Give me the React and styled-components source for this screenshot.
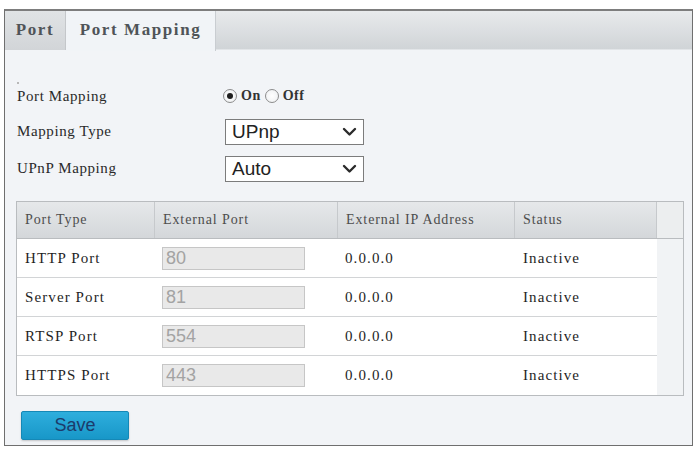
import React from "react";
import styled, {createGlobalStyle} from "styled-components";

const GlobalStyle = createGlobalStyle`
    body {
        margin: 0;
        background: #ffffff;
        font-family: "Liberation Serif", serif;
    }
    * { box-sizing: border-box; }
`;

const ports = [
    {name: "HTTP Port", ext: "80", ip: "0.0.0.0", status: "Inactive"},
    {name: "Server Port", ext: "81", ip: "0.0.0.0", status: "Inactive"},
    {name: "RTSP Port", ext: "554", ip: "0.0.0.0", status: "Inactive"},
    {name: "HTTPS Port", ext: "443", ip: "0.0.0.0", status: "Inactive"},
];

function Chevron() {
    return (
        <svg width="15" height="10" viewBox="0 0 15 10">
            <path d="M2 2 L7.5 7.5 L13 2" fill="none" stroke="#2b2b2b" strokeWidth="2.4" strokeLinecap="round" strokeLinejoin="round" />
        </svg>
    );
}

function App() {
    return (
        <Frame>
            <GlobalStyle />
            <TabBar>
                <Tab>Port</Tab>
                <Tab $active>Port Mapping</Tab>
            </TabBar>
            <Content>
                <Dot />
                <Form>
                    <Label>Port Mapping</Label>
                    <RadioGroup>
                        <Radio $checked />
                        <RadioText>On</RadioText>
                        <Radio />
                        <RadioText>Off</RadioText>
                    </RadioGroup>
                    <Label>Mapping Type</Label>
                    <Select>
                        <span>UPnp</span>
                        <Chevron />
                    </Select>
                    <Label>UPnP Mapping</Label>
                    <Select>
                        <span>Auto</span>
                        <Chevron />
                    </Select>
                </Form>
                <Table>
                    <HeadRow>
                        <HeadCell>Port Type</HeadCell>
                        <HeadCell>External Port</HeadCell>
                        <HeadCell>External IP Address</HeadCell>
                        <HeadCell>Status</HeadCell>
                        <HeadCell $spare />
                    </HeadRow>
                    {ports.map((p) => (
                        <BodyRow key={p.name}>
                            <Cell>{p.name}</Cell>
                            <Cell $pad={7}>
                                <PortInput>{p.ext}</PortInput>
                            </Cell>
                            <Cell $pad={7}>{p.ip}</Cell>
                            <Cell>{p.status}</Cell>
                            <Spare />
                        </BodyRow>
                    ))}
                </Table>
                <SaveButton>Save</SaveButton>
            </Content>
        </Frame>
    );
}

const Frame = styled.div`
    margin: 9px 0 0 4px;
    width: 689px;
    height: 437px;
    border: 1px solid #6f6f6f;
    border-top: 2px solid #7d7d7d;
    display: flex;
    flex-direction: column;
    background: #f2f4f7;
`;

const TabBar = styled.div`
    display: flex;
    height: 39px;
    background: linear-gradient(#e8eaec, #d0d4d7);
    border-bottom: 1px solid #e2e5e8;
`;

const Tab = styled.div`
    display: flex;
    align-items: center;
    justify-content: center;
    width: ${p => p.$active ? "150px" : "61px"};
    height: ${p => p.$active ? "40px" : "39px"};
    background: ${p => p.$active ? "#f1f4f7" : "linear-gradient(#e0e3e5, #d2d5d8)"};
    border-right: ${p => p.$active ? "1px solid #c9cdd1" : "1px solid #c4c7ca"};
    font-size: 17px;
    font-weight: bold;
    letter-spacing: 1.6px;
    color: #4f5458;
    padding-bottom: 2px;
`;

const Content = styled.div`
    flex: 1;
    padding: 32px 7px 0 11px;
    display: flex;
    flex-direction: column;
`;

const Dot = styled.div`
    width: 2px;
    height: 2px;
    margin-left: 1px;
    background: #b8b8b8;
`;

const Form = styled.div`
    display: grid;
    grid-template-columns: 208px 1fr;
    grid-template-rows: 22px 25px 25px;
    row-gap: 12px;
    align-items: center;
    margin-top: 1px;
    padding-left: 1px;
`;

const Label = styled.div`
    font-size: 15px;
    letter-spacing: 0.6px;
    color: #2a2a2a;
`;

const RadioGroup = styled.div`
    display: flex;
    align-items: center;
    gap: 4px;
    margin-left: -2px;
`;

const Radio = styled.span`
    position: relative;
    width: 14px;
    height: 14px;
    border-radius: 50%;
    border: 1px solid #8c8c8c;
    background: radial-gradient(#ffffff, #eceef0);
    &::after {
        content: "";
        display: ${p => p.$checked ? "block" : "none"};
        position: absolute;
        left: 3px;
        top: 3px;
        width: 6px;
        height: 6px;
        border-radius: 50%;
        background: #1e1e1e;
    }
`;

const RadioText = styled.span`
    font-size: 14px;
    font-weight: bold;
    letter-spacing: 0.5px;
    color: #333;
`;

const Select = styled.div`
    display: flex;
    align-items: center;
    justify-content: space-between;
    width: 139px;
    height: 26px;
    padding: 0 6px 0 6px;
    background: #ffffff;
    border: 1.5px solid #7c7c7c;
    font-family: "Liberation Sans", Arial, sans-serif;
    font-size: 19px;
    color: #222;
`;

const Table = styled.div`
    margin-top: 20px;
    width: 668px;
    border: 1px solid #b9bcbf;
    background: #f1f3f5;
`;

const cols = "138px 183px 177px 142px 1fr";

const HeadRow = styled.div`
    display: grid;
    grid-template-columns: ${cols};
    height: 37px;
    background: linear-gradient(#e6e8ea, #d4d7da);
    border-bottom: 1px solid #b9bcbf;
`;

const HeadCell = styled.div`
    display: flex;
    align-items: center;
    padding-left: 8px;
    border-right: ${p => p.$spare ? "none" : "1px solid #c6c9cc"};
    background: ${p => p.$spare ? "#eceeef" : "transparent"};
    font-size: 14px;
    letter-spacing: 0.9px;
    color: #4d4d4d;
`;

const BodyRow = styled.div`
    display: grid;
    grid-template-columns: ${cols};
    height: 39px;
`;

const Cell = styled.div`
    display: flex;
    align-items: center;
    padding-left: ${p => p.$pad ?? 8}px;
    background: #ffffff;
    border-bottom: 1px solid #d2d4d6;
    font-size: 15px;
    letter-spacing: 1.1px;
    color: #1f1f1f;
    ${BodyRow}:last-child & {
        border-bottom: none;
    }
`;

const Spare = styled.div`
    background: #f1f3f5;
`;

const PortInput = styled.div`
    display: flex;
    align-items: center;
    width: 143px;
    height: 23px;
    padding-left: 3px;
    background: #e9e9e9;
    border: 1px solid #c6c6c6;
    font-family: "Liberation Sans", Arial, sans-serif;
    font-size: 18px;
    letter-spacing: 0;
    color: #a3a3a3;
`;

const SaveButton = styled.button`
    margin: 15px 0 0 5px;
    width: 108px;
    height: 29px;
    border: 1px solid #1588b6;
    border-radius: 2px;
    background: linear-gradient(#2eaedd, #1897c8);
    box-shadow: 0 1px 2px rgba(0,0,0,0.2);
    font-family: "Liberation Sans", Arial, sans-serif;
    font-size: 18px;
    color: #1c3b6b;
    cursor: pointer;
`;

export default App;
